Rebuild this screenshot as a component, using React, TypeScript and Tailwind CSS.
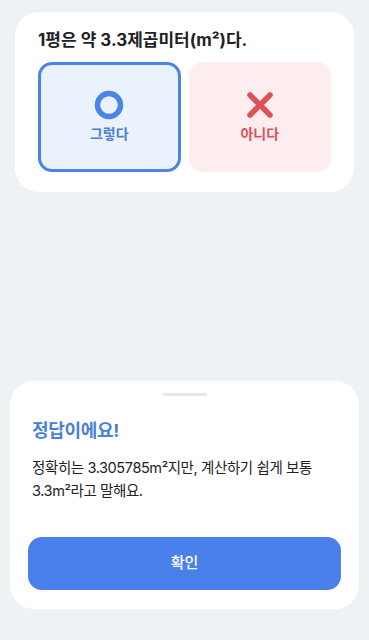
const font = { fontFamily: 'Inter, "Noto Sans CJK KR", sans-serif' };

function CircleMark() {
  return (
    <svg width="30" height="30" viewBox="0 0 30 30" fill="none">
      <circle cx="15" cy="15" r="11.5" stroke="#4a84e6" strokeWidth="5.5" />
    </svg>
  );
}

function CrossMark() {
  return (
    <svg width="30" height="30" viewBox="0 0 30 30" fill="none">
      <path d="M5 5 L25 25 M25 5 L5 25" stroke="#de5158" strokeWidth="5.5" strokeLinecap="round" />
    </svg>
  );
}

export default function App() {
  return (
    <div
      className="flex h-[640px] w-full flex-col justify-between bg-[#eff2f4] pt-[12px] pb-[31px]"
      style={font}
    >
      <section className="mx-[15px] rounded-[24px] bg-white px-[23px] pt-[16px] pb-[20px]">
        <h1 className="text-[17px] leading-6 font-bold text-[#222]">
          1평은 약 3.3제곱미터(m²)다.
        </h1>
        <div className="mt-[10px] grid grid-cols-2 gap-[8px]">
          <button className="flex h-[110px] flex-col items-center justify-center gap-[4px] rounded-[14px] border-[3px] border-[#4a84e6] bg-[#e9f2fd]">
            <CircleMark />
            <span className="text-[14px] leading-5 font-bold text-[#4a7fd6]">그렇다</span>
          </button>
          <button className="flex h-[110px] flex-col items-center justify-center gap-[4px] rounded-[14px] bg-[#fdedef]">
            <CrossMark />
            <span className="text-[14px] leading-5 font-bold text-[#d8545b]">아니다</span>
          </button>
        </div>
      </section>

      <section className="mx-[10px] rounded-[24px] bg-white px-[18px] pt-[12px] pb-[19px]">
        <div className="mx-auto h-[3px] w-[44px] rounded-full bg-[#e3e6ea]" />
        <h2 className="mt-[23px] px-[4px] text-[18px] leading-6 font-bold tracking-[-0.3px] text-[#4a80d8]">
          정답이에요!
        </h2>
        <p className="mt-[13px] px-[4px] text-[14.5px] leading-[23px] tracking-[-0.4px] text-[#222]">
          정확히는 3.305785m²지만, 계산하기 쉽게 보통 3.3m²라고 말해요.
        </p>
        <button className="mt-[35px] flex h-[53px] w-full items-center justify-center rounded-[14px] bg-[#4a80ec] text-[15px] font-medium text-white">
          확인
        </button>
      </section>
    </div>
  );
}
